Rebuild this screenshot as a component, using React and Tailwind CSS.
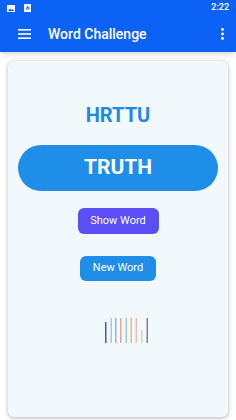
import React from 'react';

const BARS = [
  { x: 1, y: 4, color: '#3f5f92' },
  { x: 6.5, y: 0, color: '#a7c8ec' },
  { x: 11, y: 0, color: '#8fb5e4' },
  { x: 16, y: 0, color: '#e6a88e' },
  { x: 21.5, y: 0, color: '#a3c4ea' },
  { x: 26.5, y: 0, color: '#eebc5c' },
  { x: 31.5, y: 0, color: '#f1b9b2' },
  { x: 37, y: 12, color: '#f4d27a' },
  { x: 42.5, y: 0, color: '#8c74ad' },
];

function StatusBar() {
  return (
    <div className="h-4 flex items-center justify-between px-[7px] bg-[#0d62f6]">
      <div className="flex items-center gap-[9px]">
        <svg width="8" height="7" viewBox="0 0 8 7">
          <rect x="0" y="0" width="8" height="7" rx="0.5" fill="white" />
          <path d="M1 6 L3 3.5 L4.5 5 L5.5 4 L7 6 Z" fill="#0d62f6" />
        </svg>
        <svg width="7" height="8" viewBox="0 0 7 8">
          <rect x="0" y="0" width="7" height="8" rx="0.5" fill="white" />
          <text x="3.5" y="6.3" textAnchor="middle" fontSize="6" fontWeight="700" fill="#0d62f6" fontFamily="Roboto, sans-serif">A</text>
        </svg>
      </div>
      <span className="text-[9px] text-white font-medium">2:22</span>
    </div>
  );
}

function AppBar() {
  return (
    <div className="h-9 flex items-center bg-[#0d62f6] shadow-md relative z-10">
      <div className="w-12 flex justify-center">
        <svg width="13" height="10" viewBox="0 0 13 10">
          <rect y="0" width="13" height="1.6" fill="white" />
          <rect y="4.2" width="13" height="1.6" fill="white" />
          <rect y="8.4" width="13" height="1.6" fill="white" />
        </svg>
      </div>
      <span className="text-white text-[14px] font-medium flex-1">Word Challenge</span>
      <div className="w-7 flex justify-center">
        <svg width="3" height="12" viewBox="0 0 3 12">
          <circle cx="1.5" cy="1.5" r="1.4" fill="white" />
          <circle cx="1.5" cy="6" r="1.4" fill="white" />
          <circle cx="1.5" cy="10.5" r="1.4" fill="white" />
        </svg>
      </div>
    </div>
  );
}

export default function App() {
  return (
    <div className="w-[236px] h-[420px] bg-white overflow-hidden flex flex-col" style={{ fontFamily: 'Roboto, "Liberation Sans", sans-serif' }}>
      <StatusBar />
      <AppBar />
      <div className="flex-1 px-2 pt-[9px] pb-[3px]">
        <div className="h-full rounded-md bg-[#f1f9fc] shadow-[0_1px_4px_rgba(0,0,0,0.3)] flex flex-col items-center pt-[44px]">
          <div className="text-[#1e88e5] text-[20px] font-bold leading-none">HRTTU</div>
          <div className="mt-[20px] w-[200px] h-[46px] rounded-full bg-[#1e8ee9] flex items-center justify-center">
            <span className="text-white text-[21px] font-bold">TRUTH</span>
          </div>
          <button className="mt-[17px] w-[81px] h-[26px] rounded-md bg-[#5b4ef6] text-white text-[11px]">Show Word</button>
          <button className="mt-[22px] w-[76px] h-[25px] rounded-md bg-[#1e8ee9] text-white text-[11px]">New Word</button>
          <svg className="mt-[37px] ml-[16px]" width="45" height="25" viewBox="0 0 45 25">
            {BARS.map((b, i) => (
              <rect key={i} x={b.x} y={b.y} width="1.5" height={25 - b.y} fill={b.color} />
            ))}
          </svg>
        </div>
      </div>
    </div>
  );
}
